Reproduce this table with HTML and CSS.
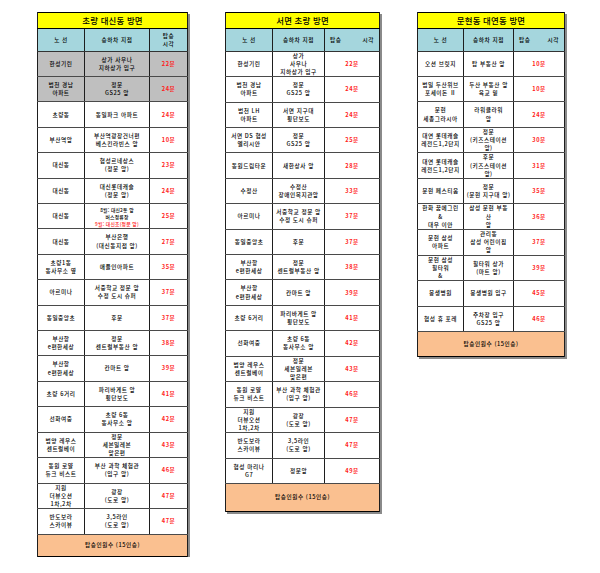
FILE: index.html
```html
<!DOCTYPE html>
<html lang="ko">
<head>
<meta charset="utf-8">
<title>셔틀 탑승 시각표</title>
<link rel="stylesheet" href="styles.css">
</head>
<body>
<div class="page">

<table class="sched s1">
<colgroup><col class="c1"><col class="c2"><col class="c3"></colgroup>
<tr class="title"><td colspan="3">초량 대신동 방면</td></tr>
<tr class="head"><td>노 선</td><td>승하차 지점</td><td>탑승<br>시각</td></tr>
<tr class="grey"><td>한성기린</td><td>상가 사우나<br>지하상가 입구</td><td class="tm">22분</td></tr>
<tr class="grey"><td>범천 경남<br>아파트</td><td>정문<br>GS25 앞</td><td class="tm">24분</td></tr>
<tr><td>초량동</td><td>동일파크 아파트</td><td class="tm">24분</td></tr>
<tr><td>부산역앞</td><td>부산역광장건너편<br>베스킨라빈스 앞</td><td class="tm">10분</td></tr>
<tr><td>대신동</td><td>협성르네상스<br>(정문 앞)</td><td class="tm">23분</td></tr>
<tr><td>대신동</td><td>대신롯데캐슬<br>(정문 앞)</td><td class="tm">24분</td></tr>
<tr><td>대신동</td><td class="mini">8월: 대신2동 앞<br>버스정류장<br><span class="red">9월: 대신초(정문 앞)</span></td><td class="tm">25분</td></tr>
<tr><td>대신동</td><td>부산은행<br>(대신동지점 앞)</td><td class="tm">27분</td></tr>
<tr><td>초량1동<br>동사무소 옆</td><td>애플인아파트</td><td class="tm">35분</td></tr>
<tr><td>아르미나</td><td>서중학교 정문 앞<br>수정 도시 슈퍼</td><td class="tm">37분</td></tr>
<tr><td>동일중앙초</td><td>후문</td><td class="tm">37분</td></tr>
<tr><td>부산항<br>e편한세상</td><td>정문<br>센트럴부동산 앞</td><td class="tm">38분</td></tr>
<tr><td>부산항<br>e편한세상</td><td>칸마트 앞</td><td class="tm">39분</td></tr>
<tr><td>초량 6거리</td><td>파리바게트 앞<br>횡단보도</td><td class="tm">41분</td></tr>
<tr><td>선화여중</td><td>초량 6동<br>동사무소 앞</td><td class="tm">42분</td></tr>
<tr><td>범양 레우스<br>센트럴베이</td><td>정문<br>세븐일레븐<br>맞은편</td><td class="tm">43분</td></tr>
<tr><td>동원 로얄<br>듀크 비스트</td><td>부산 과학 체험관<br>(입구 앞)</td><td class="tm">46분</td></tr>
<tr><td>지원<br>더뷰오션<br>1차,2차</td><td>광장<br>(도로 앞)</td><td class="tm">47분</td></tr>
<tr><td>반도보라<br>스카이뷰</td><td>3,5라인<br>(도로 앞)</td><td class="tm">47분</td></tr>
<tr class="foot f1"><td colspan="3">탑승인원수 (15인승)</td></tr>
</table>

<table class="sched s2">
<colgroup><col class="c1"><col class="c2"><col class="c3"></colgroup>
<tr class="title"><td colspan="3">서면 초량 방면</td></tr>
<tr class="head"><td>노 선</td><td>승하차 지점</td><td><div class="split"><span>탑승</span><span>시각</span></div></td></tr>
<tr><td>한성기린</td><td>상가<br>사우나<br>지하상가 입구</td><td class="tm">22분</td></tr>
<tr><td>범천 경남<br>아파트</td><td>정문<br>GS25 앞</td><td class="tm">24분</td></tr>
<tr><td>범천 LH<br>아파트</td><td>서면 지구대<br>횡단보도</td><td class="tm">24분</td></tr>
<tr><td>서면 DS 협성<br>엘리시안</td><td>정문<br>GS25 앞</td><td class="tm">25분</td></tr>
<tr><td>동원드림타운</td><td>새한상사 앞</td><td class="tm">28분</td></tr>
<tr><td>수정산</td><td>수정산<br>장애인복지관앞</td><td class="tm">33분</td></tr>
<tr><td>아르미나</td><td>서중학교 정문 앞<br>수정 도시 슈퍼</td><td class="tm">37분</td></tr>
<tr><td>동일중앙초</td><td>후문</td><td class="tm">37분</td></tr>
<tr><td>부산항<br>e편한세상</td><td>정문<br>센트럴부동산 앞</td><td class="tm">38분</td></tr>
<tr><td>부산항<br>e편한세상</td><td>칸마트 앞</td><td class="tm">39분</td></tr>
<tr><td>초량 6거리</td><td>파리바게트 앞<br>횡단보도</td><td class="tm">41분</td></tr>
<tr><td>선화여중</td><td>초량 6동<br>동사무소 앞</td><td class="tm">42분</td></tr>
<tr><td>범양 레우스<br>센트럴베이</td><td>정문<br>세븐일레븐<br>맞은편</td><td class="tm">43분</td></tr>
<tr><td>동원 로얄<br>듀크 비스트</td><td>부산 과학 체험관<br>(입구 앞)</td><td class="tm">46분</td></tr>
<tr><td>지원<br>더뷰오션<br>1차,2차</td><td>광장<br>(도로 앞)</td><td class="tm">47분</td></tr>
<tr><td>반도보라<br>스카이뷰</td><td>3,5라인<br>(도로 앞)</td><td class="tm">47분</td></tr>
<tr><td>협성 마리나<br>G7</td><td>정문앞</td><td class="tm">49분</td></tr>
<tr class="foot f2"><td colspan="3">탑승인원수 (15인승)</td></tr>
</table>

<table class="sched s3">
<colgroup><col class="c1"><col class="c2"><col class="c3"></colgroup>
<tr class="title"><td colspan="3">문현동 대연동 방면</td></tr>
<tr class="head"><td>노 선</td><td>승하차 지점</td><td><div class="split"><span>탑승</span><span>시각</span></div></td></tr>
<tr><td>오션 브릿지</td><td>탑 부동산 앞</td><td class="tm">10분</td></tr>
<tr><td>범일 두산위브<br>포세이돈 Ⅱ</td><td>두산 부동산 앞<br>육교 밑</td><td class="tm">10분</td></tr>
<tr><td>문현<br>세종그라시아</td><td>라워클라워<br>앞</td><td class="tm">24분</td></tr>
<tr><td>대연 롯데캐슬<br>레전드1,2단지</td><td>정문<br>(키즈스테이션<br>앞)</td><td class="tm">30분</td></tr>
<tr><td>대연 롯데캐슬<br>레전드1,2단지</td><td>후문<br>(키즈스테이션<br>앞)</td><td class="tm">31분</td></tr>
<tr><td>문현 페스티움</td><td>정문<br>(문현 지구대 앞)</td><td class="tm">35분</td></tr>
<tr><td>한화 꿈에그린<br>&amp;<br>대우 이안</td><td>삼성 문현 부동<br>산<br>앞</td><td class="tm">36분</td></tr>
<tr><td>문현 삼성<br>아파트</td><td>관리동<br>삼성 어린이집<br>앞</td><td class="tm">37분</td></tr>
<tr><td>문현 삼성<br>힐타워<br>&amp;</td><td>힐타워 상가<br>(마트 앞)</td><td class="tm">39분</td></tr>
<tr><td>봉생병원</td><td>봉생병원 입구</td><td class="tm">45분</td></tr>
<tr><td>협성 휴 포레</td><td>주차장 입구<br>GS25 앞</td><td class="tm">46분</td></tr>
<tr class="foot f3"><td colspan="3">탑승인원수 (15인승)</td></tr>
</table>

</div>
</body>
</html>
```

FILE: styles.css
```css
html, body {
  margin: 0;
  padding: 0;
  background: #ffffff;
}

.page {
  display: flex;
  align-items: flex-start;
  gap: 37px;
  padding: 12px 0 0 37px;
  font-family: "Noto Sans CJK KR", "Noto Sans", sans-serif;
  color: #000000;
}

.sched {
  border-collapse: collapse;
  table-layout: fixed;
  border: 1px solid #000000;
  box-shadow: 2px 2px 0 #8a8a8a;
  background: #ffffff;
  font-size: 5.65px;
  line-height: 8.2px;
  letter-spacing: 0.55px;
  font-weight: 500;
}

.sched td {
  padding: 0;
  text-align: center;
  vertical-align: middle;
  white-space: nowrap;
  overflow: visible;
  border-left: 1px solid #1e1e1e;
  border-right: 1px solid #1e1e1e;
  border-bottom: 1px solid #4a4a4a;
}

.sched tr {
  height: 25.4px;
}

.s1 { width: 150px; }
.s1 .c1 { width: 47px; }
.s1 .c2 { width: 65px; }
.s1 .c3 { width: 38px; }

.s2 { width: 154px; }
.s2 .c1 { width: 47px; }
.s2 .c2 { width: 52px; }
.s2 .c3 { width: 55px; }

.s3 { width: 147px; }
.s3 .c1 { width: 46px; }
.s3 .c2 { width: 50px; }
.s3 .c3 { width: 51px; }

.sched tr.title {
  height: 16px;
}

.sched tr.title td {
  background: #ffff00;
  font-size: 8.4px;
  line-height: 12.2px;
  letter-spacing: 0.2px;
  border-bottom: 1px solid #000000;
}

.sched tr.head {
  height: 22.7px;
}

.sched tr.head td {
  background: #a5d6dd;
  border-bottom: 1px solid #333333;
}

.split {
  display: flex;
  justify-content: space-between;
  padding: 0 5px 0 5px;
}

.sched tr.grey td {
  background: #bfbfbf;
}

.sched td.tm {
  color: #ff1a1a;
  font-weight: bold;
}

.sched td.mini {
  font-size: 4.8px;
  line-height: 7px;
  letter-spacing: 0.2px;
}

.red {
  color: #ff1a1a;
}

.sched tr.foot td {
  background: #fac090;
  border-bottom: 0;
}

.sched tr.f1 { height: 22px; }
.sched tr.f2 { height: 28px; }
.sched tr.f3 { height: 25px; }
```
